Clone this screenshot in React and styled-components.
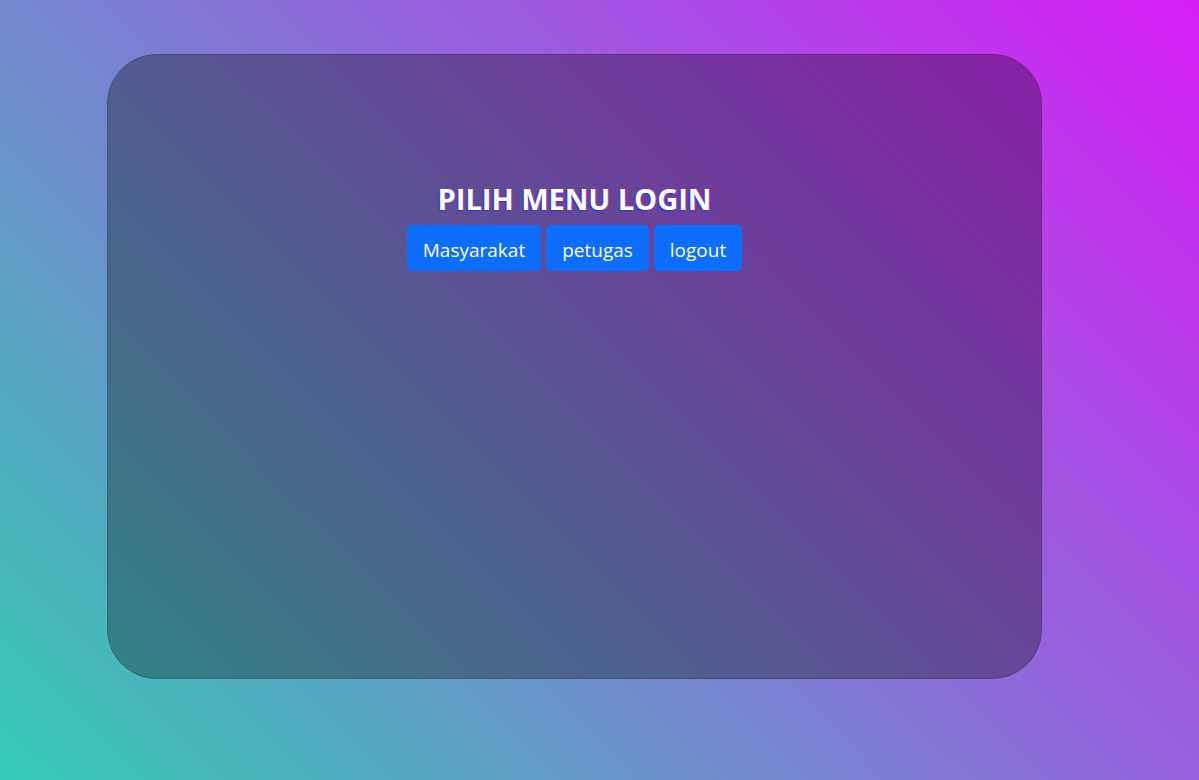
import React from "react";
import styled, { createGlobalStyle } from "styled-components";

const Global = createGlobalStyle`
  html, body { margin: 0; padding: 0; }
  body {
    min-height: 780px;
    font-family: "Open Sans", "Noto Sans", sans-serif;
    background: linear-gradient(45deg, #34cdb5 0%, #d61cf6 100%);
    background-attachment: fixed;
  }
  #root { min-height: 780px; }
`;

const Page = styled.div`
  box-sizing: border-box;
  min-height: 780px;
  padding: 54px 157px 101px 107px;
  display: flex;
`;

const Card = styled.div`
  box-sizing: border-box;
  flex: 1;
  height: 625px;
  border-radius: 50px;
  background: rgba(0, 0, 0, 0.3);
  border: 1px solid rgba(0, 0, 0, 0.15);
  display: flex;
  flex-direction: column;
  align-items: center;
  padding-top: 127px;
`;

const Title = styled.h2`
  margin: 0 0 8px;
  font-size: 29px;
  font-weight: 700;
  line-height: 1.2;
  color: #ffffff;
  text-shadow: -1px 1px 1px rgba(30, 50, 255, 0.9), 1px 0 1px rgba(255, 60, 160, 0.7);
`;

const Row = styled.div`
  display: flex;
  gap: 5px;
`;

const Button = styled.button`
  box-sizing: border-box;
  font-family: "Open Sans", "Noto Sans", sans-serif;
  font-size: 19px;
  line-height: 1.5;
  color: #fff;
  background: #0d6efd;
  border: 1px solid #0d6efd;
  border-radius: 5px;
  padding: 4px 15px 0;
  height: 46px;
  cursor: pointer;
`;

export default function App() {
  return (
    <>
      <Global />
      <Page>
        <Card>
          <Title>PILIH MENU LOGIN</Title>
          <Row>
            <Button>Masyarakat</Button>
            <Button>petugas</Button>
            <Button>logout</Button>
          </Row>
        </Card>
      </Page>
    </>
  );
}
